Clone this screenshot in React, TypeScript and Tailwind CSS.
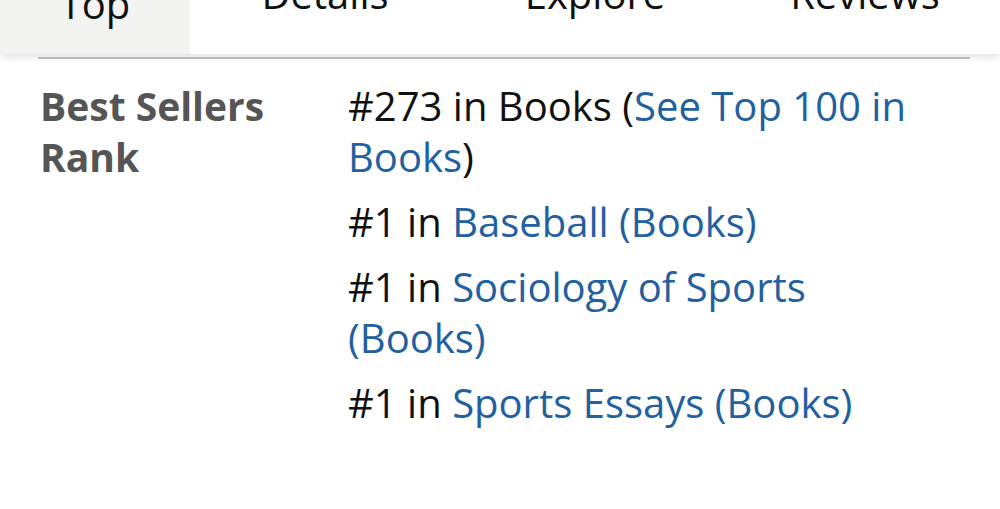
import React from 'react';

const tabs = ['Details', 'Explore', 'Reviews'];

function Link({ children }: { children: React.ReactNode }) {
  return <a className="text-[#22609f]">{children}</a>;
}

export default function App() {
  return (
    <div className="w-[1000px] h-[509px] overflow-hidden bg-white font-['Open_Sans',sans-serif] text-[40px] text-[#111]">
      {/* tab bar, scrolled mostly out of view */}
      <div className="relative z-10 flex h-[54px] overflow-hidden bg-white shadow-[0_3px_8px_rgba(0,0,0,0.12)]">
        <div className="flex w-[190px] shrink-0 flex-col items-center justify-end bg-[#f3f4f2] pb-[30px] leading-[40px]">
          <span>Back to</span>
          <span>Top</span>
        </div>
        {tabs.map((t) => (
          <div key={t} className="flex flex-1 items-end justify-center pb-[40px] leading-[40px]">
            {t}
          </div>
        ))}
      </div>

      <div className="mx-[38px] mt-[3px] h-[2px] w-[932px] bg-[#c4c4c4]" />

      <div className="flex pt-[21px] leading-[51px]">
        <div className="w-[348px] shrink-0 pl-[40px] pr-[60px] text-[39px] font-bold text-[#555]">
          Best Sellers Rank
        </div>
        <ul className="flex w-[595px] flex-col gap-[14px]">
          <li>
            #273 in Books (<Link>See Top 100 in Books</Link>)
          </li>
          <li>
            #1 in <Link>Baseball (Books)</Link>
          </li>
          <li>
            #1 in <Link>Sociology of Sports (Books)</Link>
          </li>
          <li>
            #1 in <Link>Sports Essays (Books)</Link>
          </li>
        </ul>
      </div>
    </div>
  );
}
